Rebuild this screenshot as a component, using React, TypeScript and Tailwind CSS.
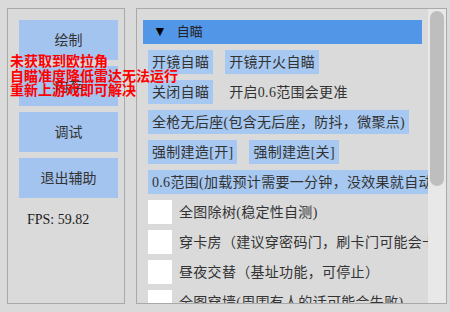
import type { ReactNode } from "react";

const font = { fontFamily: '"Liberation Serif", "Noto Sans CJK SC", serif' };

function SideButton({ children }: { children: ReactNode }) {
  return (
    <div className="flex h-[40px] w-[99px] items-center justify-center bg-[#a3c4ee] text-[14px] text-[#333]">
      {children}
    </div>
  );
}

function Chip({ children, plain }: { children: ReactNode; plain?: boolean }) {
  return (
    <div
      className={
        "flex h-[24px] shrink-0 items-center whitespace-nowrap px-[4px] text-[14px] tracking-[0.3px] text-[#333] " +
        (plain ? "" : "bg-[#a6c8f1]")
      }
    >
      {children}
    </div>
  );
}

function Check({ label }: { label: string }) {
  return (
    <div className="flex h-[24px] items-center gap-[7px] whitespace-nowrap">
      <div className="h-[24px] w-[24px] shrink-0 bg-white" />
      <span className="text-[14px] tracking-[0.3px] text-[#333]">{label}</span>
    </div>
  );
}

export default function App() {
  return (
    <div className="relative flex h-[312px] w-[450px] gap-[11px] overflow-hidden bg-[#dadada] pl-[7px] pt-[8px]" style={font}>
      {/* left menu */}
      <div className="flex h-[296px] w-[118px] shrink-0 flex-col gap-[6px] border border-[#a9a9a9] pl-[11px] pt-[11px]">
        <SideButton>绘制</SideButton>
        <SideButton>内存</SideButton>
        <SideButton>调试</SideButton>
        <SideButton>退出辅助</SideButton>
        <div className="pl-[8px] pt-[5px] text-[14px] text-[#222]">FPS: 59.82</div>
      </div>

      {/* right panel */}
      <div className="flex h-[296px] w-[311px] shrink-0 border border-[#a9a9a9]">
        <div className="flex min-w-0 flex-1 flex-col gap-[6px] overflow-hidden pl-[6px] pt-[11px]">
          <div className="flex h-[24px] w-[279px] shrink-0 items-center gap-[10px] bg-[#5296e8] pl-[10px] text-[13px] text-[#222]">
            <span className="text-[14px] leading-none text-black">▼</span>
            <span>自瞄</span>
          </div>
          <div className="flex flex-col gap-[6px] pl-[5px]">
            <div className="flex gap-[12px]">
              <Chip>开镜自瞄</Chip>
              <Chip>开镜开火自瞄</Chip>
            </div>
            <div className="flex gap-[12px]">
              <Chip>关闭自瞄</Chip>
              <Chip plain>开启0.6范围会更准</Chip>
            </div>
            <div className="flex">
              <Chip>全枪无后座(包含无后座，防抖，微聚点)</Chip>
            </div>
            <div className="flex gap-[12px]">
              <Chip>强制建造[开]</Chip>
              <Chip>强制建造[关]</Chip>
            </div>
            <div className="flex">
              <Chip>0.6范围(加载预计需要一分钟，没效果就自动重启)</Chip>
            </div>
            <Check label="全图除树(稳定性自测)" />
            <Check label="穿卡房（建议穿密码门，刷卡门可能会卡住）" />
            <Check label="昼夜交替（基址功能，可停止）" />
            <Check label="全图穿墙(周围有人的话可能会失败)" />
          </div>
        </div>
        <div className="flex w-[18px] shrink-0 justify-center bg-[#e8e8e8] pt-[2px]">
          <div className="h-[175px] w-[14px] rounded-full bg-[#bebebe]" />
        </div>
      </div>

      {/* warning overlay */}
      <div className="absolute left-[10px] top-[55px] text-[14px] font-bold leading-[14.5px] text-[#ff0000]">
        <div>未获取到欧拉角</div>
        <div>自瞄准度降低雷达无法运行</div>
        <div>重新上游戏即可解决</div>
      </div>
    </div>
  );
}
